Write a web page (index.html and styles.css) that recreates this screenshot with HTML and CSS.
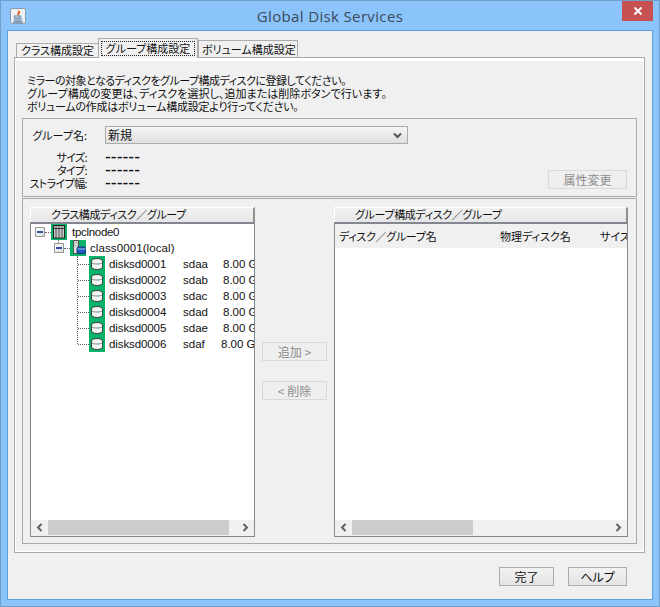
FILE: index.html
```html
<!DOCTYPE html>
<html lang="ja">
<head>
<meta charset="utf-8">
<title>Global Disk Services</title>
<link rel="stylesheet" href="styles.css">
</head>
<body>
<svg class="defs" width="0" height="0" aria-hidden="true">
  <symbol id="disk" viewBox="0 0 16 16">
    <rect width="16" height="16" fill="#0ab26a"/>
    <path d="M2.500 5C2.500 3.500 5 2.500 8 2.500s5.500 1 5.500 2.500v6c0 1.500-2.500 2.500-5.500 2.500s-5.500-1-5.500-2.500z" fill="#f4f4f4" stroke="#34443e"/>
    <path d="M3 6.500c0 1.200 2.300 1.500 5 1.500s5-.3 5-1.500" fill="none" stroke="#7f8a86"/>
  </symbol>
  <symbol id="node" viewBox="0 0 16 16">
    <rect width="16" height="16" fill="#0ab26a"/>
    <rect x="2.500" y="1.500" width="11" height="12.500" fill="#c9c9c9" stroke="#222"/>
    <path d="M5 2v12M8 2v12M11 2v12" stroke="#555"/>
    <path d="M3 4.500h10" stroke="#333"/>
  </symbol>
  <symbol id="cls" viewBox="0 0 16 16">
    <rect width="16" height="16" fill="#0ab26a"/>
    <rect x="3.500" y="0.500" width="5" height="13" fill="#e4e4e4" stroke="#555"/>
    <rect x="5" y="2" width="2" height="4" fill="#fff" stroke="#888" stroke-width=".6"/>
    <rect x="7" y="7" width="8.500" height="6.500" rx="1.500" fill="#1a5cc4" stroke="#12346e"/>
    <path d="M7.500 9h8" stroke="#9cc0f0"/>
  </symbol>
</svg>
<div class="window">
  <header class="titlebar">
    <svg class="app-icon" width="16" height="16" viewBox="0 0 16 16">
      <rect x=".5" y=".5" width="15" height="15" rx="2" fill="#eef2f6" stroke="#8b98a6"/>
      <path d="M8.500 2.500c1.500 1.500-1.800 2.500-.5 4.500 0-1.300 2.600-1.700 1.500-3.500" fill="none" stroke="#e2641c" stroke-width="1.200"/>
      <path d="M4 8h7l-1 2H5zM3.500 11h9M4.500 12.800h7" fill="none" stroke="#5a80a8"/>
      <path d="M3 14h10" stroke="#2f5f90"/>
    </svg>
    <span class="title">Global Disk Services</span>
    <button class="close" type="button" aria-label="閉じる">
      <svg width="10" height="10" viewBox="0 0 10 10"><path d="M1.500 1.500l7 7M8.500 1.500l-7 7" stroke="#fff" stroke-width="2"/></svg>
    </button>
  </header>
  <main class="client">
    <nav class="tabs">
      <span class="tab">クラス構成設定</span>
      <span class="tab tab-active"><span class="tab-focus">グループ構成設定</span></span>
      <span class="tab tab-last">ボリューム構成設定</span>
    </nav>
    <section class="tab-panel">
      <p class="intro"><span class="line line1">ミラーの対象となるディスクをグループ構成ディスクに登録してください。</span><span class="line line2">グループ構成の変更は、ディスクを選択し、追加または削除ボタンで行います。</span><span class="line line3">ボリュームの作成はボリューム構成設定より行ってください。</span></p>
      <div class="group-box">
        <div class="name-row">
          <span class="label">グループ名:</span>
          <div class="combo"><span>新規</span>
            <svg width="9" height="7" viewBox="0 0 9 7"><path d="M1 1.500l3.500 3.500L8 1.500" fill="none" stroke="#555" stroke-width="2"/></svg>
          </div>
        </div>
        <div class="info-row">
          <dl class="info">
            <dt class="label">サイズ:</dt><dd>------</dd>
            <dt class="label">タイプ:</dt><dd>------</dd>
            <dt class="label">ストライプ幅:</dt><dd>------</dd>
          </dl>
          <button class="btn btn-disabled btn-attr" type="button">属性変更</button>
        </div>
      </div>
      <div class="transfer">
        <div class="pane pane-left">
          <div class="pane-head">クラス構成ディスク／グループ</div>
          <div class="pane-box">
            <div class="pane-body tree">
              <div class="tree-row row-root"><span class="exp"></span><span class="hline"></span><svg class="ico"><use href="#node"/></svg><span class="tree-text">tpclnode0</span></div>
              <div class="tree-row row-class"><span class="exp"></span><span class="hline"></span><svg class="ico"><use href="#cls"/></svg><span class="tree-text">class0001(local)</span></div>
              <div class="disks">
                <div class="tree-row"><span class="branch"></span><svg class="ico"><use href="#disk"/></svg><span class="d-name">disksd0001</span><span class="d-dev">sdaa</span><span class="d-size">8.00 G</span></div>
                <div class="tree-row"><span class="branch"></span><svg class="ico"><use href="#disk"/></svg><span class="d-name">disksd0002</span><span class="d-dev">sdab</span><span class="d-size">8.00 G</span></div>
                <div class="tree-row"><span class="branch"></span><svg class="ico"><use href="#disk"/></svg><span class="d-name">disksd0003</span><span class="d-dev">sdac</span><span class="d-size">8.00 G</span></div>
                <div class="tree-row"><span class="branch"></span><svg class="ico"><use href="#disk"/></svg><span class="d-name">disksd0004</span><span class="d-dev">sdad</span><span class="d-size">8.00 G</span></div>
                <div class="tree-row"><span class="branch"></span><svg class="ico"><use href="#disk"/></svg><span class="d-name">disksd0005</span><span class="d-dev">sdae</span><span class="d-size">8.00 G</span></div>
                <div class="tree-row"><span class="branch"></span><svg class="ico"><use href="#disk"/></svg><span class="d-name">disksd0006</span><span class="d-dev d-dev-short">sdaf</span><span class="d-size">8.00 G</span></div>
              </div>
            </div>
            <div class="hscroll">
              <span class="arrow"><svg width="7" height="9" viewBox="0 0 7 9"><path d="M5.500 1L2 4.500 5.500 8" fill="none" stroke="#606060" stroke-width="2"/></svg></span>
              <span class="track"><span class="thumb thumb-left"></span></span>
              <span class="arrow"><svg width="7" height="9" viewBox="0 0 7 9"><path d="M1.500 1L5 4.500 1.500 8" fill="none" stroke="#606060" stroke-width="2"/></svg></span>
            </div>
          </div>
        </div>
        <div class="middle">
          <button class="btn btn-disabled btn-move" type="button">追加 &gt;</button>
          <button class="btn btn-disabled btn-move" type="button">&lt; 削除</button>
        </div>
        <div class="pane pane-right">
          <div class="pane-head pane-head-right">グループ構成ディスク／グループ</div>
          <div class="pane-box">
            <div class="pane-body">
              <div class="col-head"><span class="c1">ディスク／グループ名</span><span class="c2">物理ディスク名</span><span class="c3">サイズ</span></div>
            </div>
            <div class="hscroll">
              <span class="arrow"><svg width="7" height="9" viewBox="0 0 7 9"><path d="M5.500 1L2 4.500 5.500 8" fill="none" stroke="#606060" stroke-width="2"/></svg></span>
              <span class="track"><span class="thumb thumb-right"></span></span>
              <span class="arrow"><svg width="7" height="9" viewBox="0 0 7 9"><path d="M1.500 1L5 4.500 1.500 8" fill="none" stroke="#606060" stroke-width="2"/></svg></span>
            </div>
          </div>
        </div>
      </div>
    </section>
    <footer class="footer">
      <button class="btn btn-done" type="button">完了</button>
      <button class="btn btn-help" type="button">ヘルプ</button>
    </footer>
  </main>
</div>
</body>
</html>
```
FILE: styles.css
```css
* { box-sizing: border-box; }
html, body { margin: 0; padding: 0; }
body {
  width: 660px;
  height: 607px;
  overflow: hidden;
  font-family: "Noto Sans CJK JP", "Liberation Sans", sans-serif;
  font-size: 11px;
  color: #111;
  font-feature-settings: "palt";
}
.defs { position: absolute; }
.window {
  width: 660px;
  height: 607px;
  background: #8ac4fa;
  border: 1px solid #6f9ecb;
  padding: 0 6px 6px;
  display: flex;
  flex-direction: column;
}
.titlebar {
  height: 29px;
  flex: none;
  display: flex;
  align-items: flex-start;
  position: relative;
}
.app-icon { margin: 7px 0 0 3px; }
.title {
  position: absolute;
  left: 0;
  right: 0;
  top: 5px;
  text-align: center;
  font-family: "Open Sans", sans-serif;
  font-size: 15px;
  line-height: 20px;
  letter-spacing: 0.35px;
  color: #3c4a58;
}
.close {
  position: absolute;
  right: 0;
  top: 0;
  width: 31px;
  height: 20px;
  padding: 0;
  border: 0;
  background: #c75050;
  display: flex;
  align-items: center;
  justify-content: center;
}
.client {
  flex: 1;
  background: #f0f0f0;
  border: 1px solid #5f9fdc;
  padding: 7px 7px 0 6px;
  display: flex;
  flex-direction: column;
}
.tabs {
  height: 20px;
  flex: none;
  display: flex;
  align-items: flex-end;
  padding-left: 2px;
  margin-bottom: -1px;
  position: relative;
  z-index: 1;
}
.tab {
  height: 14px;
  margin-bottom: 1px;
  padding: 0 3px;
  background: #f0f0f0;
  border: 1px solid #acacac;
  border-bottom: 0;
  font-size: 11px;
  line-height: 13px;
  white-space: nowrap;
  width: 83px;
  text-align: center;
}
.tab-last { width: 100px; height: 17px; line-height: 16px; }
.tab-active {
  width: 100px;
  height: 20px;
  margin-left: -1px;
  margin-bottom: 0;
  padding: 2px;
  position: relative;
}
.tab-focus {
  display: block;
  height: 15px;
  line-height: 13px;
  border: 1px dotted #222;
}
.tab-panel {
  height: 496px;
  flex: none;
  background: #f0f0f0;
  border: 1px solid #a9a9a9;
  box-shadow: inset 1px 0 #fff, inset 0 3px #fff, inset 0 -1px #fff, inset -1px 0 #fff;
  padding: 16px 7px 8px;
  display: flex;
  flex-direction: column;
}
.intro {
  margin: 0 0 5px 5px;
  height: 39px;
  font-size: 11px;
  line-height: 13px;
  white-space: nowrap;
}
.line { display: block; }
.line1 { letter-spacing: -0.5px; }
.line2 { letter-spacing: 0.05px; }
.line3 { letter-spacing: -0.27px; }
.group-box {
  height: 79px;
  flex: none;
  border: 1px solid #a9a9a9;
  padding: 7px 9px 6px 0;
  display: flex;
  flex-direction: column;
  justify-content: space-between;
}
.name-row { display: flex; align-items: center; }
.name-row .label { width: 64px; }
.label {
  text-align: right;
  font-size: 11px;
  line-height: 13px;
  white-space: nowrap;
}
.combo {
  margin-left: 18px;
  width: 303px;
  height: 18px;
  border: 1px solid #acacac;
  background: linear-gradient(#f4f4f4, #e0e0e0);
  padding: 0 5px 0 2px;
  display: flex;
  align-items: center;
  justify-content: space-between;
  font-size: 12px;
  line-height: 16px;
}
.info-row { display: flex; align-items: flex-end; justify-content: space-between; }
.info {
  margin: 0;
  display: grid;
  grid-template-columns: 64px auto;
  column-gap: 18px;
  line-height: 13px;
}
.info .label { letter-spacing: -0.6px; }
.info dd { margin: 0; font-family: "Liberation Sans", sans-serif; font-size: 17.5px; line-height: 13px; font-weight: 400; }
.btn {
  padding: 0;
  font-family: inherit;
  font-feature-settings: inherit;
  font-size: 12px;
  line-height: 15px;
  height: 19px;
  background: linear-gradient(#f2f2f2, #e4e4e4);
  border: 1px solid #acacac;
  color: #111;
}
.btn-disabled { background: #efefef; border-color: #d9d9d9; color: #8d8d8d; }
.btn-attr { width: 79px; margin-bottom: 1px; }
.transfer {
  margin-top: 1px;
  flex: 1;
  border: 1px solid #a9a9a9;
  padding: 8px 7px 6px 7px;
  display: flex;
}
.pane { display: flex; flex-direction: column; }
.pane-left { width: 225px; }
.pane-right { width: 294px; }
.pane-head {
  height: 15px;
  flex: none;
  background: linear-gradient(#f2f2f2, #e6e6e6);
  border-top: 1px solid #fff;
  border-left: 1px solid #fff;
  border-right: 2px solid #8f8f8f;
  font-size: 11px;
  line-height: 12px;
  padding-left: 20px;
  white-space: nowrap;
  letter-spacing: -0.4px;
}
.pane-head-right { letter-spacing: -0.35px; }
.pane-box {
  flex: 1;
  border: 1px solid #828790;
  border-top-width: 2px;
  background: #fff;
  display: flex;
  flex-direction: column;
  min-height: 0;
}
.pane-body { flex: 1; overflow: hidden; min-height: 0; }
.tree {
  font-family: "Liberation Sans", sans-serif;
  font-size: 11.5px;
  white-space: nowrap;
}
.tree-row { height: 16px; display: flex; align-items: center; line-height: 16px; }
.row-root { padding-left: 4px; }
.row-class { padding-left: 23px; position: relative; }
.row-class::before {
  content: "";
  position: absolute;
  left: 27px;
  top: 0;
  height: 3px;
  border-left: 1px dotted #666;
}
.exp {
  width: 10px;
  height: 10px;
  flex: none;
  border: 1px solid #9a9a9a;
  background: linear-gradient(135deg, #fff, #ddd);
  position: relative;
}
.exp::after {
  content: "";
  position: absolute;
  left: 1px;
  right: 1px;
  top: 3px;
  height: 2px;
  background: #2f4fa8;
}
.hline { width: 6px; flex: none; border-bottom: 1px dotted #666; }
.ico { width: 16px; height: 16px; flex: none; }
.tree-text { margin-left: 5px; }
.row-root .tree-text { letter-spacing: -0.3px; }
.row-class .tree-text { margin-left: 4px; letter-spacing: 0.1px; }
.disks { margin-left: 46px; border-left: 1px dotted #666; height: 88px; }
.branch { width: 11px; flex: none; border-bottom: 1px dotted #666; }
.d-name { margin-left: 4px; width: 74px; flex: none; letter-spacing: -0.1px; }
.d-dev { width: 40px; flex: none; }
.d-dev-short { width: 38px; }
.d-size { flex: none; }
.col-head {
  height: 24px;
  background: #f0f0f0;
  display: flex;
  align-items: center;
  font-size: 11px;
  white-space: nowrap;
  padding-left: 4px;
}
.c1 { width: 161px; flex: none; letter-spacing: -0.3px; }
.c2 { width: 100px; flex: none; }
.hscroll { height: 16px; flex: none; display: flex; background: #f0f0f0; align-items: flex-start; }
.arrow { width: 17px; height: 15px; flex: none; display: flex; justify-content: center; align-items: center; }
.track { flex: 1; height: 15px; display: flex; }
.thumb { height: 15px; background: #cdcdcd; display: block; }
.thumb-left { width: 181px; }
.thumb-right { width: 121px; }
.middle {
  width: 79px;
  flex: none;
  display: flex;
  flex-direction: column;
  align-items: center;
  justify-content: center;
  gap: 20px;
  padding-bottom: 2px;
}
.btn-move { width: 65px; }
.footer {
  flex: 1;
  display: flex;
  justify-content: flex-end;
  align-items: flex-start;
  gap: 14px;
  padding: 14px 18px 0 0;
}
.btn-done { width: 55px; }
.btn-help { width: 59px; }
```
